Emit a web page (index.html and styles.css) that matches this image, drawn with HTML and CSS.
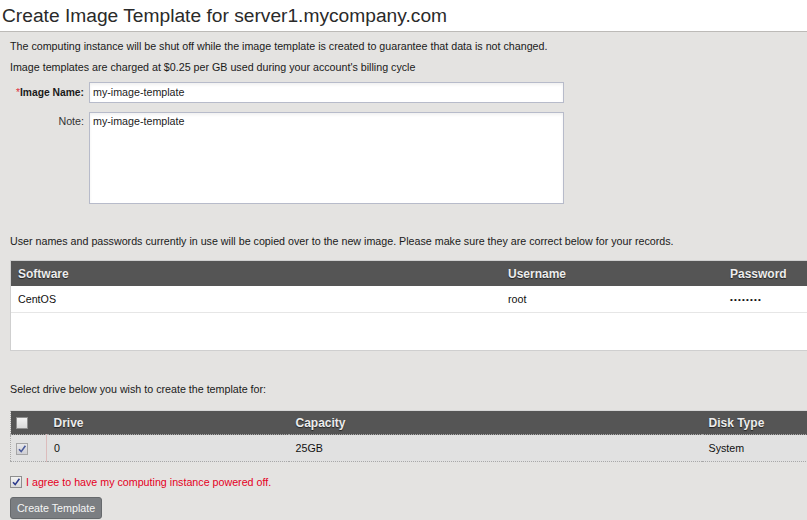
FILE: index.html
```html
<!DOCTYPE html>
<html>
<head>
<meta charset="utf-8">
<link rel="stylesheet" href="styles.css">
</head>
<body>
<h1 class="title">Create Image Template for server1.mycompany.com</h1>
<div class="panel">
  <p class="note">The computing instance will be shut off while the image template is created to guarantee that data is not changed.</p>
  <p class="note">Image templates are charged at $0.25 per GB used during your account's billing cycle</p>

  <div class="form">
    <label class="label req"><span class="star">*</span>Image Name:</label>
    <div class="field input">my-image-template</div>
    <label class="label">Note:</label>
    <div class="field textarea">my-image-template</div>
  </div>

  <p class="note users">User names and passwords currently in use will be copied over to the new image. Please make sure they are correct below for your records.</p>

  <div class="grid1">
    <table class="tbl">
      <colgroup><col class="c-sw"><col class="c-un"><col></colgroup>
      <thead><tr><th>Software</th><th>Username</th><th>Password</th></tr></thead>
      <tbody><tr><td>CentOS</td><td>root</td><td class="pw">••••••••</td></tr></tbody>
    </table>
  </div>

  <p class="note select">Select drive below you wish to create the template for:</p>

  <table class="tbl tbl2">
    <colgroup><col class="c-cb"><col class="c-dr"><col class="c-cap"><col></colgroup>
    <thead><tr><th class="cbcell"><span class="cb"></span></th><th>Drive</th><th>Capacity</th><th>Disk Type</th></tr></thead>
    <tbody><tr><td class="cbcell"><span class="cb checked dim"><svg viewBox="0 0 10 10" width="10" height="10"><path d="M2 5.2 L4.2 7.6 L8.4 1.8" fill="none" stroke="#4a5a9a" stroke-width="1.6"/></svg></span></td><td>0</td><td>25GB</td><td>System</td></tr></tbody>
  </table>

  <div class="agree">
    <span class="cb checked"><svg viewBox="0 0 10 10" width="10" height="10"><path d="M2 5.2 L4.2 7.6 L8.4 1.8" fill="none" stroke="#2c3a8c" stroke-width="1.6"/></svg></span>
    <span class="agree-text">I agree to have my computing instance powered off.</span>
  </div>

  <button class="btn">Create Template</button>
</div>
</body>
</html>
```

FILE: styles.css
```css
html, body {
  margin: 0;
  padding: 0;
  background: #ffffff;
  overflow: hidden;
  height: 520px;
}
body {
  font-family: "Liberation Sans", Arial, sans-serif;
  font-size: 10.7px;
  color: #1a1a1a;
}
.title {
  margin: 0;
  height: 31px;
  padding: 0 0 0 2px;
  box-sizing: border-box;
  font-size: 19.2px;
  font-weight: normal;
  line-height: 31px;
  color: #2a2a2a;
}
.panel {
  border-top: 1px solid #bcbab7;
  background: #e4e3e1;
  height: 500px;
  overflow: hidden;
  padding: 7px 0 0 10px;
  box-sizing: border-box;
}
.note {
  margin: 0 0 7px 0;
  line-height: 14px;
  white-space: nowrap;
}
.form {
  display: grid;
  grid-template-columns: 74px 475px;
  column-gap: 5px;
  row-gap: 9px;
  margin-top: 8px;
}
.label {
  text-align: right;
  color: #333;
}
.req {
  font-weight: bold;
  color: #1a1a1a;
  line-height: 21px;
  font-size: 10.3px;
}
.star { color: #e0303a; font-weight: normal; }
.form .label:not(.req) { padding-top: 2px; line-height: 14px; }
.field {
  background: #fff;
  border: 1px solid #b7bbca;
  box-shadow: inset 0 2px 3px rgba(0,0,0,0.06);
  box-sizing: border-box;
  padding-left: 3px;
  color: #222;
}
.input { height: 21px; line-height: 19px; }
.textarea { height: 92px; line-height: 14px; padding-top: 1px; }

.users { margin-top: 30px; margin-bottom: 12px; }

.grid1 {
  width: 830px;
  height: 91px;
  background: #fff;
  border: 1px solid #cfcfcf;
  box-sizing: border-box;
}
.tbl {
  border-collapse: collapse;
  table-layout: fixed;
  width: 830px;
}
.c-sw { width: 490px; }
.c-un { width: 222px; }
.tbl th {
  background: #555555;
  color: #ececec;
  font-size: 12px;
  font-weight: bold;
  text-align: left;
  height: 25px;
  padding: 0 0 0 7px;
  text-shadow: 0 1px 1px #222;
}
.tbl td {
  height: 26px;
  padding: 0 0 0 7px;
  border-bottom: 1px solid #e6e6e6;
  color: #111;
}
.pw { font-size: 8px; letter-spacing: 1.2px; color: #101050; }

.select { margin-top: 31px; margin-bottom: 14px; }

.tbl2 {
  border-top: 1px solid #d6d6d6;
  border-left: 1px dotted #a8a8a8;
}
.c-cb { width: 36px; }
.c-dr { width: 242px; }
.c-cap { width: 413px; }
.tbl2 th { height: 23px; }
.tbl2 td {
  height: 26px;
  background: #e1e1e1;
  border-top: 1px dotted #a8a8a8;
  border-bottom: 1px dotted #a8a8a8;
}
.tbl2 .cbcell { padding-left: 5px; }
.tbl2 td.cbcell { border-right: 1px solid #dcbcbc; }

.cb {
  display: inline-block;
  width: 12px;
  height: 12px;
  box-sizing: border-box;
  border: 1px solid #8e8e8e;
  background: linear-gradient(#f2f2f2, #dadada);
  vertical-align: middle;
  position: relative;
}
.cb svg { position: absolute; left: 0; top: 0; }
.cb.dim { border-color: #a5a5a5; background: linear-gradient(#e8e8ea, #cfcfd4); }

.agree {
  display: flex;
  align-items: center;
  gap: 4px;
  margin-top: 13px;
  height: 13px;
}
.agree-text { color: #e4001e; }

.btn {
  display: block;
  margin-top: 9px;
  height: 22px;
  width: 92px;
  padding: 0;
  background: #7b7e82;
  border: 1px solid #66696c;
  border-radius: 3px;
  color: #f5f5f5;
  font-family: "Liberation Sans", Arial, sans-serif;
  font-size: 10.7px;
}
```
